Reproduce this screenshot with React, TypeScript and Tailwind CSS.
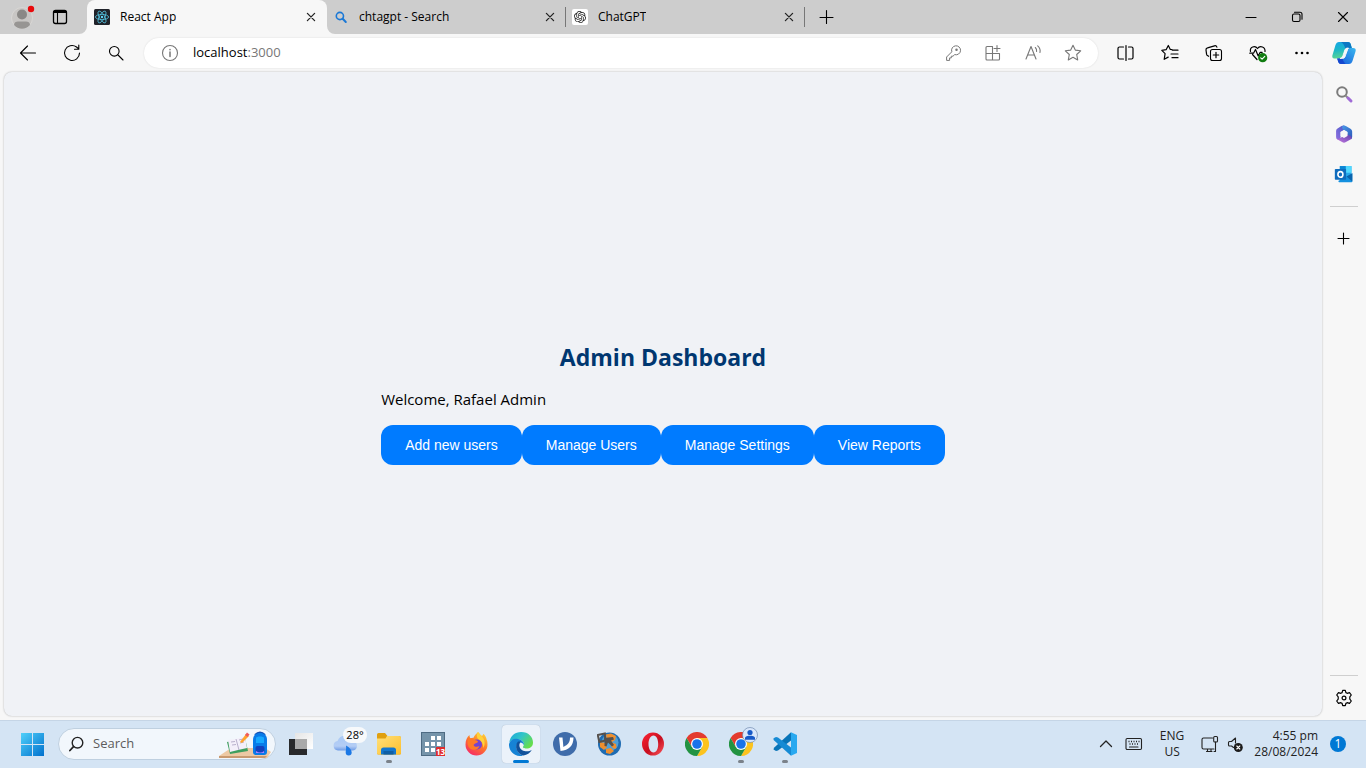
import type { ReactNode } from "react";
import { SiOpenai } from "react-icons/si";

type IconProps = { size?: string; children: ReactNode };

/* 20x20 thin outlined icon used by the browser chrome */
function Line({ size = "size-5", children }: IconProps) {
  return (
    <svg viewBox="0 0 20 20" className={`${size} shrink-0`} fill="none" stroke="currentColor" strokeWidth="1.1" strokeLinecap="round" strokeLinejoin="round" aria-hidden="true">
      {children}
    </svg>
  );
}

/* 24x24 coloured app icon */
function AppIcon({ size = "size-6", children }: IconProps) {
  return (
    <svg viewBox="0 0 24 24" className={`${size} shrink-0`} aria-hidden="true">
      {children}
    </svg>
  );
}

const CloseX = () => (
  <Line size="size-4">
    <path d="M5.500 5.500l9 9M14.500 5.500l-9 9" strokeWidth="1.6" />
  </Line>
);

const ReactLogo = () => (
  <svg viewBox="0 0 16 16" className="size-4 shrink-0" fill="none" stroke="#53c1de" strokeWidth=".8" aria-hidden="true">
    <rect width="16" height="16" rx="1.5" fill="#20232a" stroke="none" />
    <ellipse cx="8" cy="8" rx="6.6" ry="2.6" />
    <ellipse cx="8" cy="8" rx="6.6" ry="2.6" transform="rotate(60 8 8)" />
    <ellipse cx="8" cy="8" rx="6.6" ry="2.6" transform="rotate(120 8 8)" />
    <circle cx="8" cy="8" r="1.2" fill="#61dafb" stroke="none" />
  </svg>
);

const BingSearch = () => (
  <svg viewBox="0 0 16 16" className="size-4 shrink-0" fill="none" stroke="#1a78d6" aria-hidden="true">
    <circle cx="6.9" cy="7" r="3.6" strokeWidth="1.6" />
    <path d="M9.7 9.8l3.1 3.2" strokeWidth="2" strokeLinecap="round" />
  </svg>
);

const Chrome = () => (
  <>
    <path d="M1.6 6A12 12 0 0 1 22.4 6L12 6 6.8 15Z" fill="#e33b2e" />
    <path d="M22.4 6A12 12 0 0 1 12 24L17.2 15 12 6Z" fill="#fcc31e" />
    <path d="M12 24A12 12 0 0 1 1.6 6L6.8 15 17.2 15Z" fill="#229342" />
    <circle cx="12" cy="12" r="6" fill="#fff" />
    <circle cx="12" cy="12" r="4.8" fill="#1a73e8" />
  </>
);

const STAR = "M10 2.2l2.3 4.9 5.4.7-4 3.7 1 5.4L10 14.3l-4.7 2.6 1-5.4-4-3.7 5.4-.7z";

const addressTools = [
  {
    name: "Saved passwords",
    icon: <><path d="M3.6 17v-3l5.2-5.2A4.500 4.500 0 1 1 11.7 11.6L10 13.2H8.300v1.700H6.600V17z" strokeWidth="1" /><circle cx="13.500" cy="6.800" r=".7" fill="currentColor" /></>,
  },
  {
    name: "Install app",
    icon: <><path d="M9.500 3.500H4a1 1 0 0 0-1 1V16a1 1 0 0 0 1 1h11.500a1 1 0 0 0 1-1v-5.500H3M9.500 3.500V17M14 2.500v6M11 5.500h6" /></>,
  },
  {
    name: "Read aloud",
    icon: <path d="M3 16L8 3.500 13 16M4.700 12h6.600M12.300 4.500c1.100 1 1.500 2.300 1.300 4M14.700 2.800c2 1.700 2.800 4 2.300 6.700" />,
  },
  { name: "Add to favorites", icon: <path d={STAR} /> },
];

const toolbarTools = [
  {
    name: "Split screen",
    icon: <path d="M7.500 4h-4a1.500 1.500 0 0 0-1.500 1.500v9A1.500 1.500 0 0 0 3.500 16h4M12.500 4h3A1.500 1.500 0 0 1 17 5.500v9a1.500 1.500 0 0 1-1.500 1.500h-3M10 2.500v15" strokeWidth="1.200" />,
  },
  {
    name: "Favorites",
    icon: <path d="M12 6.700l-1.700-.3L8.300 2.500 6.100 6.700l-4.300.7 3.300 3.200-.9 5.700 4-2.200M12.500 7.200h5.500M11 11h7M12 14.700h6" strokeWidth="1.200" />,
  },
  {
    name: "Collections",
    icon: <><rect x="6.500" y="6.500" width="11" height="11" rx="2" /><path d="M12 9.300v5.400M9.300 12h5.400M4.600 13.300l-1.100-.7a2 2 0 0 1-.9-1.200L2 7a2 2 0 0 1 1.500-2.200l7-2a2 2 0 0 1 2.400 1.300" strokeWidth="1.200" /></>,
  },
  {
    name: "Browser essentials",
    icon: <><path d="M2.500 8.500c-1-4.500 4.500-6.500 7-3 2.500-3.500 8-1.500 7.500 3M4.500 11.500l4.500 5M1.800 10.200h3.700l2-3.700 2.700 6.500 2-3.700h2" strokeWidth="1.200" /><circle cx="14.700" cy="14.700" r="4.600" fill="#107c10" stroke="none" /><path d="M12.700 14.800l1.400 1.400 2.700-2.900" stroke="#fff" /></>,
  },
  {
    name: "Settings and more",
    icon: <g fill="currentColor" stroke="none"><circle cx="4.500" cy="10" r="1.300" /><circle cx="10" cy="10" r="1.300" /><circle cx="15.500" cy="10" r="1.300" /></g>,
  },
];

const taskbarApps: { name: string; state?: "open" | "active"; icon: ReactNode; badge?: ReactNode }[] = [
  {
    name: "Task View",
    icon: <><path d="M0 7h18v16H0z" fill="#292a2c" /><path d="M6 1h18v16H6z" fill="url(#paneLight)" /><path d="M6 7h12v10H6z" fill="#a9a9a9" /></>,
  },
  {
    name: "Weather",
    icon: <><path d="M5 18.500A4.800 4.800 0 0 1 4.500 9 8 8 0 0 1 19.500 9 4.800 4.800 0 0 1 20 18.500z" fill="url(#cloud)" /><path d="M13 13.500c3.500 1.700 5.700 4.500 5.700 7a3 3 0 0 1-6 0c0-2 .8-4 .3-7z" fill="#1b78e5" /></>,
    badge: (
      <span className="absolute left-5 top-[7px] flex h-4 w-6 items-center justify-center rounded-full bg-[#f7f9fb] text-[11px] leading-4 text-black">28°</span>
    ),
  },
  {
    name: "File Explorer",
    state: "open",
    icon: <><path d="M0 2.500A1.500 1.500 0 0 1 1.500 1H8l2.500 3H22a2 2 0 0 1 2 2v15a1.500 1.500 0 0 1-1.500 1.500h-21A1.500 1.500 0 0 1 0 21z" fill="#e0a010" /><path d="M0 6.500h8.500L10 4h12a2 2 0 0 1 2 2v15a1.500 1.500 0 0 1-1.500 1.500h-21A1.500 1.500 0 0 1 0 21z" fill="url(#folder)" /><path d="M4 22.500V18a2.500 2.500 0 0 1 2.500-2.500h10A2.500 2.500 0 0 1 19 18v4.500z" fill="#1377ce" /><path d="M6.500 19h10v3.500h-10z" fill="#0f5fa5" /></>,
  },
  {
    name: "Calendar",
    icon: <><path d="M0 0h24v24H0z" fill="#4e6b83" /><path d="M1 1h22v22H1z" fill="#7594aa" /><path d="M10 4h4v4h-4zM16 4h4v4h-4zM4 10h4v4H4zM10 10h4v4h-4zM16 10h4v4h-4zM4 16h4v4H4zM10 16h4v4h-4z" fill="#fff" /><path d="M15 15h9v9h-9z" fill="#e02c2c" /><text x="19.500" y="22.500" textAnchor="middle" fontSize="8" fontWeight="700" fill="#fff">13</text></>,
  },
  {
    name: "Firefox",
    icon: <><path d="M13 0c2 2 2.500 3 4 4 1-.8 1.200-1.500 1.300-2.200 2 1.700 3 3.700 3.400 6 .6 1 .8 3 .8 4.700A11 11 0 0 1 .5 12.500C.5 8.500 2 5 4.500 3c0 1.500.3 2.500 1 3.300 1-.5 2-.7 3-.6C9.500 3 11.500 1.500 13 0z" fill="url(#fox)" /><path d="M13 0c1.500 2 2.500 3 4 4.500 3 3 3.500 8 1.300 11.500 0-4-1.800-7.500-5.300-9-1.500-2-1.500-4.500 0-7z" fill="#ffd23a" /><circle cx="12" cy="12.500" r="5" fill="#7542d0" /><path d="M3 7.500c2-1.700 5-1 6.500.5 2.500 0 3.500 1 3.500 2-1 1.500-3.500 1-4.500 3 1 2.500 4.500 2 6 1-1.500 4-6 5-9.500 2.500C2.500 14 2 10.500 3 7.500z" fill="#ff7a27" /></>,
  },
  {
    name: "Microsoft Edge",
    state: "active",
    icon: <><path d="M.3 10.500C1.300 4 6 0 12.200 0 19.500 0 24 5 24 10.500c0 4-3 6-6.500 6-2.500 0-4.200-1-3.300-2 1.500-2 .8-6-3.700-7C6 6.500 2 8 .3 10.500z" fill="url(#edgeTop)" /><path d="M0 12c1-4 5-6 9-5 4 .7 6.500 3.500 5.800 6-2-3.500-6.300-3-7.300.5C6.500 18 10 22 14 23.700 6.500 25.500-.5 19.500 0 12z" fill="#1683d5" /><path d="M9 9.500c-4 4.500-1.500 12.500 5.500 14 3.500-.5 6.500-2.500 8.300-5.500-4 2.500-11 1.500-12.300-3.500-.4-2 .2-3.800 1.500-5z" fill="#10519b" /></>,
  },
  {
    name: "VSDC",
    icon: <><circle cx="12" cy="12" r="12" fill="#3f6caa" /><path d="M6 5.500H9.500l.9 9.500C15 12.500 17 10.500 17 5.500h3.500c0 8-4.500 13-13 13.500z" fill="#fff" /></>,
  },
  {
    name: "Game",
    icon: (
      <>
        <circle cx="12.500" cy="12" r="11.500" fill="#1f6cb2" />
        <circle cx="13" cy="10.500" r="8.500" fill="#4f9fd6" />
        <path d="M9 2.500l5-1 5 2.500-1 4-3 2-5-2zM3 10l5 1 2 4-3 3-4-3zM14 10l5 2 .5 4-2.500 1-3-3zM9 17l5-1 3 3-4 3-4-1z" fill="#ee8f2f" />
        <path d="M.8 3l7-1.500.5 7-6 1.500z" fill="none" stroke="#55504c" strokeWidth="2" />
        <path d="M7 6l9-1 1 2.500-3 1 3 4.500-2 1.500-4-4-1.500 4-2-.5V9z" fill="#55504c" />
      </>
    ),
  },
  {
    name: "Opera",
    icon: <path fillRule="evenodd" d="M12 .5a11 11.500 0 1 0 0 23 11 11.500 0 1 0 0-23zM12.500 3.500c3 0 4.700 4 4.700 8.500s-1.700 8.500-4.700 8.500-5-4-5-8.500 2-8.500 5-8.500z" fill="url(#opera)" />,
  },
  { name: "Google Chrome", icon: <Chrome /> },
  {
    name: "Google Chrome, profile 2",
    state: "open",
    icon: <Chrome />,
    badge: (
      <svg viewBox="0 0 16 16" className="absolute left-[23px] top-[7px] size-4" aria-hidden="true">
        <circle cx="8" cy="8" r="7.500" fill="#d9e7fb" stroke="#627da4" strokeWidth=".6" />
        <circle cx="8" cy="5.500" r="2.600" fill="#1659c7" />
        <path d="M3 12.700V11c0-1.700 3-2.300 5-2.300s5 .6 5 2.300v1.700z" fill="#1659c7" />
      </svg>
    ),
  },
  {
    name: "Visual Studio Code",
    state: "open",
    icon: <><path d="M18 .3L24 3v18l-6 2.700z" fill="#29a9f0" /><path d="M18 .3L1 15.700l-.5 1.800L3 19l2-.5L18 8.500z" fill="#0874b8" /><path d="M18 23.700L.6 8l-.1-1.700L3 5l2 .5 13 10z" fill="#168ad4" /></>,
  },
];

function Defs() {
  return (
    <svg className="absolute size-0" aria-hidden="true">
      <defs>
        <linearGradient id="paneLight" x1="0" y1="0" x2="1" y2="1"><stop stopColor="#e5e5e5" /><stop offset="1" stopColor="#fff" /></linearGradient>
        <linearGradient id="cloud" x1="0" y1="0" x2="0" y2="1"><stop stopColor="#a9c9f5" /><stop offset=".7" stopColor="#b4cdf5" /><stop offset="1" stopColor="#6f9ce6" /></linearGradient>
        <linearGradient id="folder" x1="0" y1="0" x2="1" y2="1"><stop stopColor="#ffe07a" /><stop offset="1" stopColor="#fdbf2d" /></linearGradient>
        <linearGradient id="fox" x1=".8" y1="0" x2=".2" y2="1"><stop stopColor="#ffd43a" /><stop offset=".45" stopColor="#ff7d26" /><stop offset="1" stopColor="#f5246a" /></linearGradient>
        <linearGradient id="edgeTop" x1="0" y1="0" x2="1" y2=".6"><stop stopColor="#1ba5dc" /><stop offset=".5" stopColor="#31c5c8" /><stop offset="1" stopColor="#66dd4c" /></linearGradient>
        <linearGradient id="opera" x1="0" y1="0" x2="1" y2="1"><stop stopColor="#ff2334" /><stop offset=".55" stopColor="#c70f20" /><stop offset="1" stopColor="#ff5a5f" /></linearGradient>
        <linearGradient id="win" x1="0" y1="0" x2="1" y2="1"><stop stopColor="#4fd0fa" /><stop offset="1" stopColor="#0070cd" /></linearGradient>
        <linearGradient id="copA" x1="0" y1="0" x2=".2" y2="1"><stop stopColor="#16a4e8" /><stop offset=".5" stopColor="#1ab6c8" /><stop offset="1" stopColor="#58d495" /></linearGradient>
        <linearGradient id="copB" x1="1" y1="0" x2="0" y2="1"><stop stopColor="#3ab8ee" /><stop offset="1" stopColor="#1657dc" /></linearGradient>
        <linearGradient id="m365a" x1="1" y1="0" x2="0" y2="1"><stop stopColor="#4a5cc8" /><stop offset="1" stopColor="#8f6fe0" /></linearGradient>
        <linearGradient id="m365b" x1="0" y1="0" x2="1" y2="1"><stop stopColor="#4b9be8" /><stop offset="1" stopColor="#2a55b8" /></linearGradient>
        <linearGradient id="m365c" x1="0" y1="1" x2="1" y2="0"><stop stopColor="#c77be0" /><stop offset="1" stopColor="#5a3fae" /></linearGradient>
      </defs>
    </svg>
  );
}

function Tab({ title, icon, active = false }: { title: string; icon: ReactNode; active?: boolean }) {
  return (
    <div className={active ? "relative flex w-60 items-center rounded-t-lg bg-[#f7f7f7] pl-[7px] pr-2" : "relative flex w-[239px] items-center pl-1.5 pr-2"}>
      {active && (
        <>
          <svg viewBox="0 0 8 8" className="absolute -left-2 bottom-0 size-2" aria-hidden="true"><path d="M8 0v8H0a8 8 0 0 0 8-8z" fill="#f7f7f7" /></svg>
          <svg viewBox="0 0 8 8" className="absolute -right-2 bottom-0 size-2" aria-hidden="true"><path d="M0 0v8h8a8 8 0 0 1-8-8z" fill="#f7f7f7" /></svg>
        </>
      )}
      <button type="button" className="flex min-w-0 flex-1 items-center gap-2.5 text-left text-xs text-black">
        {icon}
        <span className="truncate">{title}</span>
      </button>
      <button type="button" aria-label={`Close ${title}`} className="text-[#222]"><CloseX /></button>
    </div>
  );
}

function TabStrip() {
  return (
    <header className="flex h-[34px] shrink-0 bg-[#cdcdcd]">
      <div className="flex w-[87px] items-center gap-[15px] pl-[11px]">
        <button type="button" aria-label="Profile">
          <svg viewBox="0 0 24 24" className="size-6" aria-hidden="true">
            <circle cx="11" cy="13" r="10.500" fill="#c8c6c4" stroke="#d9d7d5" />
            <circle cx="11" cy="9.500" r="5" fill="#8a8886" />
            <path d="M3 20c0-2.500 2-3.500 4-3.500h8c2 0 4 1 4 3.500a10.500 10.500 0 0 1-16 0z" fill="#979593" />
            <circle cx="20" cy="4" r="3.200" fill="#e8090b" />
          </svg>
        </button>
        <button type="button" aria-label="Tab actions">
          <Line><rect x="3.500" y="3.500" width="13" height="13" rx="2" strokeWidth="1.300" /><path d="M4 5h12" strokeWidth="2" /><path d="M7.500 6v10.500" /></Line>
        </button>
      </div>
      <Tab active title="React App" icon={<ReactLogo />} />
      <Tab title="chtagpt - Search" icon={<BingSearch />} />
      <div className="my-[7px] -ml-px w-px bg-[#777]" />
      <Tab title="ChatGPT" icon={<span className="flex size-4 shrink-0 items-center justify-center rounded-xs bg-white"><SiOpenai className="size-3 text-[#222]" /></span>} />
      <div className="my-[7px] -ml-px w-px bg-[#777]" />
      <button type="button" aria-label="New tab" className="ml-[11px]"><Line><path d="M10.500 3.500v13M4 10.500h13" /></Line></button>
      <div className="ml-auto flex">
        <button type="button" aria-label="Minimize" className="flex w-[46px] items-center justify-center"><Line><path d="M5 10.500h10" /></Line></button>
        <button type="button" aria-label="Restore" className="flex w-[46px] items-center justify-center"><Line><rect x="5.500" y="7" width="7.500" height="7.500" rx="1.500" /><path d="M7.500 5.200H13a2 2 0 0 1 2 2v5" /></Line></button>
        <button type="button" aria-label="Close window" className="flex w-[46px] items-center justify-center"><Line><path d="M5.500 5.500l9 9M14.500 5.500l-9 9" /></Line></button>
      </div>
    </header>
  );
}

function Toolbar() {
  return (
    <nav aria-label="Browser toolbar" className="flex h-[38px] shrink-0 items-center pr-0.5 text-black">
      <div className="flex w-36 pl-1.5">
        <button type="button" aria-label="Back" className="flex w-11 justify-center"><Line><path d="M17.500 10h-15M9.500 3L2.500 10l7 7" /></Line></button>
        <button type="button" aria-label="Refresh" className="flex w-11 justify-center"><Line><path d="M17.500 10A7.500 7.500 0 1 1 14.500 4l2 1.700M16.800 2v4.300h-4.300" /></Line></button>
        <button type="button" aria-label="Search" className="flex w-11 justify-center"><Line><circle cx="8.300" cy="8.300" r="4.800" /><path d="M12 12l5 5" /></Line></button>
      </div>
      <div className="flex h-[30px] min-w-0 flex-1 items-center rounded-full bg-white pl-4 pr-[5px] text-[#777] shadow-[0_0_2px_rgba(0,0,0,0.12)]">
        <button type="button" aria-label="Site information"><Line><circle cx="10" cy="10" r="7.500" /><path d="M10 9v4.500M10 6.500v.2" strokeWidth="1.500" /></Line></button>
        <a href="http://localhost:3000" className="ml-[13px] flex-1 text-[13px]"><span className="text-black">localhost</span>:3000</a>
        {addressTools.map((t) => (
          <button key={t.name} type="button" aria-label={t.name} className="flex w-10 justify-center"><Line>{t.icon}</Line></button>
        ))}
      </div>
      <div className="ml-1.5 flex items-center">
        {toolbarTools.map((t) => (
          <button key={t.name} type="button" aria-label={t.name} className="flex w-11 justify-center"><Line>{t.icon}</Line></button>
        ))}
        <button type="button" aria-label="Copilot" className="flex w-10 justify-center">
          <AppIcon>
            <path d="M7 1h9q2 0 2.600 1.800l1.200 4.200h-4.300q-2 0-2.700 2l-1.800 5.500q-1 3-4 3H3q-3.500 0-2.500-3.500L3.500 4Q4.500 1 7 1z" fill="url(#copA)" />
            <path d="M11 1h5q2 0 2.600 1.800l1.200 4.200h-4.300q-1.500 0-2.200 1Q12.500 3 9 1z" fill="#0b77c3" />
            <path d="M17 23H9q-2 0-2.600-1.800L5.200 17.500H8q2.500 0 3.200-2.500l.8-2.500h2.500L16.500 7H21q3.500 0 2.500 3.500l-3 9.500q-1 3-3.500 3z" fill="url(#copB)" />
            <path d="M5.200 17.500H8q1.500 0 2.300-.8.700 4.300 3.200 6.300H9q-2 0-2.600-1.800z" fill="#1547cf" />
            <path d="M16.500 7h-1q-2 0-2.700 2L11 14.500q-.8 2.500-3 3h2.500q2 0 2.700-2l1.500-5q.7-2.500 1.800-3.500z" fill="#f7f7f7" stroke="#f7f7f7" strokeWidth=".8" />
          </AppIcon>
        </button>
      </div>
    </nav>
  );
}

function SideBar() {
  return (
    <aside className="flex w-11 shrink-0 flex-col items-center">
      <div className="mt-3 flex flex-col gap-5">
        <button type="button" aria-label="Search">
          <Line><circle cx="8" cy="8" r="4.800" stroke="#7c7c7c" strokeWidth="2" /><path d="M12 12l1.500 1.500" stroke="#8a8a8a" strokeWidth="2" /><path d="M14 14l3 3" stroke="#a06bd6" strokeWidth="3" /></Line>
        </button>
        <button type="button" aria-label="Microsoft 365">
          <AppIcon size="size-5">
            <path d="M12.500 1.800Q10.500 1.500 9 2.400L4.200 5.300Q2.500 6.300 2.500 8.300V16q0 2.500 2.200 2.500 3.300 0 3.300-3.500V9.500L12.500 7z" fill="url(#m365a)" />
            <path d="M10.500 2Q12.500 1.500 14.200 2.500L19.800 5.600Q21.800 6.700 21.800 9v6.500q0 1.800-1.300 2.800-.5-2-2.500-3.200l-2-1.200V9.500L12 7.200Q8.500 5 10.500 2z" fill="url(#m365b)" />
            <path d="M2.800 17q1.700 1.500 4 .2L12 14.500l4-2.300 4 2.300q2.500 2 .3 3.800l-6 3.400q-2.300 1.300-4.600 0L4.200 18.600Q3.200 18 2.800 17z" fill="url(#m365c)" />
            <path d="M12 7.300l4.200 2.400v4.800L12 16.900l-4.200-2.400V9.700z" fill="#f7f7f7" />
          </AppIcon>
        </button>
        <button type="button" aria-label="Outlook">
          <AppIcon size="size-5">
            <path d="M7 2.500h14v18H7z" fill="#28a8ea" /><path d="M14 2.500h7v8h-7z" fill="#50d9ff" /><path d="M7 2.500h7v6H7z" fill="#0a86d4" />
            <path d="M5 20.500L22 11v10a1 1 0 0 1-1 1H6z" fill="#1490df" /><path d="M15 15l7-4v10z" fill="#0a64ad" />
            <rect x="1" y="6" width="13.500" height="13" rx="1" fill="#0f6cbd" /><ellipse cx="7.700" cy="12.500" rx="3" ry="3.400" fill="none" stroke="#fff" strokeWidth="1.900" />
          </AppIcon>
        </button>
      </div>
      <hr className="mt-[22px] w-7 border-[#cfcfcf]" />
      <button type="button" aria-label="Customize" className="mt-[22px]"><Line><path d="M9.500 4v11M4 9.500h11" /></Line></button>
      <hr className="mt-auto w-7 border-[#cfcfcf]" />
      <button type="button" aria-label="Settings" className="mb-3 mt-3">
        <Line>
          <path d="M8.700 2.300h2.600l.6 2.300 1.300.7 2.300-.6 1.800 2.300-1.500 1.900v2.200l1.500 1.900-1.800 2.300-2.300-.6-1.300.7-.6 2.300H8.700l-.6-2.300-1.300-.7-2.300.6L2.700 13l1.500-1.900V8.900L2.700 7l1.800-2.300 2.300.6 1.300-.7z" strokeWidth="1.200" /><circle cx="10" cy="10" r="1.900" strokeWidth="1.200" />
        </Line>
      </button>
    </aside>
  );
}

const actions = ["Add new users", "Manage Users", "Manage Settings", "View Reports"];

function Dashboard() {
  return (
    <main className="mb-1 ml-1 flex flex-1 flex-col items-center justify-center rounded-lg bg-[#f0f2f6] shadow-[0_0_2px_rgba(0,0,0,0.3)]">
      <div className="pt-[18px]">
        <h1 className="text-center text-[23px] font-bold leading-8 text-[#003770]">Admin Dashboard</h1>
        <p className="mb-3.5 mt-3.5 text-[15px] leading-6 text-black">Welcome, Rafael Admin</p>
        <div className="flex font-['Liberation_Sans',sans-serif]">
          {actions.map((a) => (
            <button key={a} type="button" className="h-10 rounded-xl bg-[#007bff] px-6 text-sm text-white">{a}</button>
          ))}
        </div>
      </div>
    </main>
  );
}

function TaskBar() {
  return (
    <footer className="flex h-12 shrink-0 items-center bg-[#d4e4f4] text-[#222] shadow-[inset_0_1px_0_#c5d5e6]">
      <button type="button" aria-label="Start" className="ml-[21px] mr-3.5">
        <svg viewBox="0 0 23 23" className="size-[23px]" aria-hidden="true"><path d="M0 0h11v11H0zM12 0h11v11H12zM0 12h11v11H0zM12 12h11v11H12z" fill="url(#win)" /></svg>
      </button>
      <label className="relative flex h-8 w-[218px] items-center rounded-full border border-[#bfd0e0] bg-[#f2f7fc] pl-2.5">
        <svg viewBox="0 0 16 16" className="size-4 shrink-0" fill="none" stroke="#222" strokeWidth="1.400" strokeLinecap="round" aria-hidden="true"><circle cx="8.500" cy="6.700" r="5.300" /><path d="M4.500 10.700L.9 14.500" strokeWidth="1.800" /></svg>
        <input type="text" aria-label="Search" placeholder="Search" className="ml-2 w-24 bg-transparent text-[13px] outline-none placeholder:text-[#5c5c5c]" />
        <svg viewBox="0 0 52 28" className="absolute bottom-0 right-1 h-7 w-[52px]" aria-hidden="true">
          <path d="M0 25l12-8h34l6 4-4 6H0z" fill="#edc9a4" /><path d="M0 25l48 0-2 2H0z" fill="#c99a70" />
          <path d="M8 11l18-4 3 13-18 3z" fill="#3f9f5f" /><path d="M9 9l8-1 9-3 2 12-9 2-8 2z" fill="#f4effa" /><path d="M17 8l3 11M12 11l4-.5M13 14l4-.5M20 9l4-1M21 12l4-1" stroke="#aaa0c0" strokeWidth=".8" />
          <path d="M21 11l6-8 3 2-7 7z" fill="#ffa42f" /><path d="M26 4l2-2.500 2.500 2L28.500 6z" fill="#f05b5b" />
          <path d="M36 4q5-5 10 0" fill="none" stroke="#1550b3" strokeWidth="2" /><path d="M34 9c0-5 3-7 7-7s7 2 7 7v12a3 3 0 0 1-3 3h-8a3 3 0 0 1-3-3z" fill="#087be8" /><path d="M37 7c0-2 8-2 8 0v5h-8z" fill="#16a8ff" /><rect x="36.500" y="15" width="9" height="7" rx="2" fill="#1241bd" /><path d="M37 20q4.500 3 8 0v2h-8z" fill="#a880ff" />
        </svg>
      </label>
      <div className="ml-[3px] flex">
        {taskbarApps.map((a) => (
          <button key={a.name} type="button" aria-label={a.name} className="relative flex h-12 w-11 items-center justify-center">
            <span className={a.state === "active" ? "flex size-[38px] items-center justify-center rounded-sm bg-[#ebf2fa] shadow-[0_0_1px_rgba(0,0,0,0.25)]" : "flex size-[38px] items-center justify-center"}>
              <AppIcon>{a.icon}</AppIcon>
            </span>
            {a.badge}
            {a.state === "open" && <span className="absolute bottom-[5px] h-[3px] w-1.5 rounded-full bg-[#7b828a]" />}
            {a.state === "active" && <span className="absolute bottom-[5px] h-[3px] w-4 rounded-full bg-[#0078d4]" />}
          </button>
        ))}
      </div>
      <div className="ml-auto flex items-center pr-5 text-xs leading-4">
        <button type="button" aria-label="Show hidden icons" className="mr-2"><Line><path d="M4.500 12.500L10 7l5.500 5.500" strokeWidth="1.300" /></Line></button>
        <button type="button" aria-label="Touch keyboard" className="mr-4">
          <Line><rect x="2" y="4.500" width="15.500" height="11" rx="1.200" /><path d="M4.500 7.500h11M5.500 10h9" strokeDasharray="1 1.500" strokeLinecap="butt" strokeWidth="1.400" /><path d="M5.500 13h8.500" /></Line>
        </button>
        <button type="button" className="mr-4 text-center">ENG<br />US</button>
        <button type="button" aria-label="Network and volume" className="mr-2 flex gap-1.5">
          <Line><path d="M12.500 4H3.500A1.500 1.500 0 0 0 2 5.500v8A1.500 1.500 0 0 0 3.500 15H14M6.500 17.500H12M7.500 15v2.500M11 15v2.500M15.500 8v9.500H14" /><rect x="13.700" y="2.500" width="3.800" height="5.500" rx="1" /></Line>
          <Line><path d="M7.500 13.500L5.500 12H3.500A1 1 0 0 1 2.500 11V8.500A1 1 0 0 1 3.500 7.500h2L9.500 4v5" /><circle cx="12.300" cy="13.500" r="4.500" fill="#1b1b1b" stroke="none" /><path d="M10.800 12l3 3M13.800 12l-3 3" stroke="#fff" /></Line>
        </button>
        <button type="button" className="text-right">4:55 pm<br />28/08/2024</button>
        <button type="button" aria-label="1 notification" className="ml-3 flex size-4 items-center justify-center rounded-full bg-[#0078d4] text-white">1</button>
      </div>
    </footer>
  );
}

export default function App() {
  return (
    <div className="flex min-h-screen flex-col bg-[#f7f7f7] font-['Open_Sans','Noto_Sans',sans-serif]">
      <Defs />
      <TabStrip />
      <Toolbar />
      <div className="flex flex-1">
        <Dashboard />
        <SideBar />
      </div>
      <TaskBar />
    </div>
  );
}
